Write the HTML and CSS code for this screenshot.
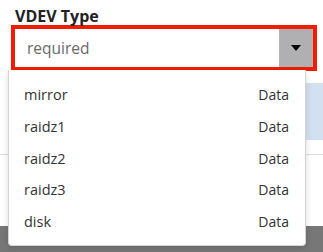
FILE: index.html
```html
<!DOCTYPE html>
<html lang="en">
<head>
  <meta charset="UTF-8" />
  <title>VDEV Type</title>
  <link rel="stylesheet" href="styles.css">
</head>
<body>
  <div class="form-field">
    <label class="field-label">VDEV Type</label>
    <div class="select-box">
      <div class="select-input">required</div>
      <div class="select-toggle"><span class="caret"></span></div>
    </div>
  </div>

  <div class="vdev-table">
    <div class="vdev-row selected"></div>
    <div class="vdev-row"></div>
  </div>

  <div class="spacer"></div>
  <footer class="modal-footer"></footer>

  <ul class="select-menu">
    <li class="menu-item"><span>mirror</span><span class="item-group">Data</span></li>
    <li class="menu-item"><span>raidz1</span><span class="item-group">Data</span></li>
    <li class="menu-item"><span>raidz2</span><span class="item-group">Data</span></li>
    <li class="menu-item"><span>raidz3</span><span class="item-group">Data</span></li>
    <li class="menu-item"><span>disk</span><span class="item-group">Data</span></li>
  </ul>
</body>
</html>
```

FILE: styles.css
```css
* {
  margin: 0;
  padding: 0;
  box-sizing: border-box;
}
html, body {
  height: 100%;
}
body {
  font-family: 'Open Sans', 'Noto Sans', sans-serif;
  background: #fff;
  color: #333;
  display: flex;
  flex-direction: column;
  position: relative;
  overflow: hidden;
}
.form-field {
  padding: 7px 6px 0 11px;
}
.field-label {
  display: block;
  padding-left: 4px;
  font-size: 16px;
  font-weight: 700;
  line-height: 18px;
  color: #222;
}
.select-box {
  display: flex;
  height: 46px;
  border: 4px solid #f01e00;
  background: #fff;
}
.select-input {
  flex: 1;
  padding-left: 12px;
  font-size: 15.5px;
  line-height: 38px;
  color: #6a6a6a;
}
.select-toggle {
  width: 34px;
  background: #b0b0b2;
  display: flex;
  align-items: center;
  justify-content: center;
}
.caret {
  width: 0;
  height: 0;
  border-left: 5px solid transparent;
  border-right: 5px solid transparent;
  border-top: 6px solid #000;
}
.vdev-table {
  margin-top: 12px;
  padding-left: 12px;
}
.vdev-row {
  height: 57px;
}
.vdev-row.selected {
  background: #d3e0ef;
}
.vdev-row + .vdev-row {
  height: 15px;
  border-bottom: 1px solid #dcdcdc;
  margin-left: -12px;
}
.spacer {
  flex: 1;
}
.modal-footer {
  height: 26px;
  background: #777;
}
.select-menu {
  position: absolute;
  top: 70px;
  left: 8px;
  width: 298px;
  list-style: none;
  background: #fff;
  border: 1px solid #d4d4d4;
  border-top: none;
  border-radius: 0 0 4px 4px;
  box-shadow: 0 2px 6px rgba(0, 0, 0, 0.15);
  padding: 9px 0 8px;
}
.menu-item {
  display: flex;
  justify-content: space-between;
  align-items: center;
  height: 31.7px;
  padding: 0 16px 0 15px;
  font-size: 14.5px;
  color: #333;
}
.item-group {
  font-size: 14px;
}
```
